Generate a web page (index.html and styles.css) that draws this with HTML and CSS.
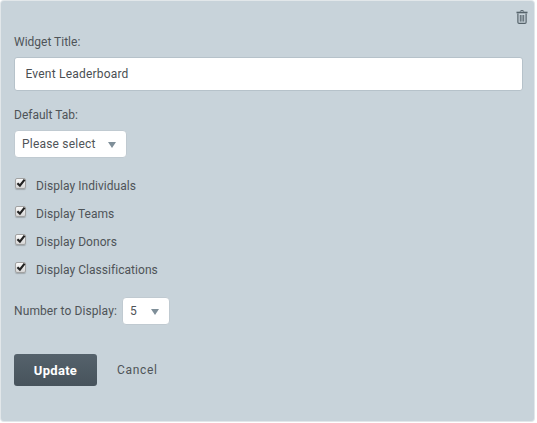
FILE: index.html
```html
<!DOCTYPE html>
<html lang="en">
<head>
<meta charset="utf-8">
<title>Event Leaderboard</title>
<link rel="stylesheet" href="styles.css">
</head>
<body>
<form class="panel">
  <div class="toolbar">
    <svg class="trash" viewBox="0 0 12 14" width="12" height="14" aria-hidden="true">
      <path d="M4.3 1.6 4.8.6h2.4l.5 1" fill="none" stroke="#55626a" stroke-width="1"/>
      <path d="M.5 2.5h11" fill="none" stroke="#55626a" stroke-width="1.6"/>
      <path d="M1.9 3.4v8.8c0 .7.5 1.2 1.2 1.2h5.8c.7 0 1.2-.5 1.2-1.2V3.4" fill="none" stroke="#55626a" stroke-width="1.2"/>
      <path d="M4.3 5v6.6M6 5v6.6M7.7 5v6.6" fill="none" stroke="#55626a" stroke-width="1"/>
    </svg>
  </div>
  <label class="label">Widget Title:</label>
  <input class="text" type="text" value="Event Leaderboard">
  <label class="label tab-label">Default Tab:</label>
  <div class="select select-wide"><span>Please select</span><i class="caret"></i></div>
  <ul class="checks">
    <li><span class="box"><svg viewBox="0 0 10 10" width="10" height="10"><path d="M1.4 5.2 3.9 7.6 8.6 1.6" fill="none" stroke="#222" stroke-width="2.2"/></svg></span>Display Individuals</li>
    <li><span class="box"><svg viewBox="0 0 10 10" width="10" height="10"><path d="M1.4 5.2 3.9 7.6 8.6 1.6" fill="none" stroke="#222" stroke-width="2.2"/></svg></span>Display Teams</li>
    <li><span class="box"><svg viewBox="0 0 10 10" width="10" height="10"><path d="M1.4 5.2 3.9 7.6 8.6 1.6" fill="none" stroke="#222" stroke-width="2.2"/></svg></span>Display Donors</li>
    <li><span class="box"><svg viewBox="0 0 10 10" width="10" height="10"><path d="M1.4 5.2 3.9 7.6 8.6 1.6" fill="none" stroke="#222" stroke-width="2.2"/></svg></span>Display Classifications</li>
  </ul>
  <div class="number">
    <span>Number to Display:</span>
    <div class="select select-small"><span>5</span><i class="caret"></i></div>
  </div>
  <div class="actions">
    <button class="update" type="button">Update</button>
    <a class="cancel">Cancel</a>
  </div>
</form>
</body>
</html>
```
FILE: styles.css
```css
html, body { margin: 0; padding: 0; background: #fff; }
body { width: 537px; height: 423px; overflow: hidden; font-family: Roboto, "Liberation Sans", sans-serif; font-size: 12px; color: #4f5458; }
.panel { box-sizing: border-box; width: 533px; height: 420px; margin: 1px 0 0 1px; padding: 9px 13px 0 13px; background: #c8d3da; border-radius: 3px; box-shadow: 0 0 0 1px #e2e7ea; display: flex; flex-direction: column; align-items: flex-start; }
.toolbar { align-self: stretch; height: 15px; display: flex; justify-content: flex-end; margin-right: -7px; }
.trash { display: block; }
.label { display: block; line-height: 16px; margin-top: 9px; }
.text { box-sizing: border-box; width: 509px; height: 34px; margin: 7px 0 0; padding: 0 10.5px; border: 1px solid #b6c2ca; border-radius: 3px; background: #fff; font: inherit; letter-spacing: 0.2px; color: #4a4f53; outline: none; }
.tab-label { margin-top: 16px; }
.select { box-sizing: border-box; height: 28px; border: 1px solid #c0cad1; border-radius: 4px; background: #fff; display: flex; align-items: center; justify-content: space-between; padding: 0 10px 0 7px; margin-top: 7px; letter-spacing: 0.2px; }
.select-wide { width: 113px; }
.select-small { width: 48px; margin-top: 0; }
.caret { width: 0; height: 0; border-left: 4.5px solid transparent; border-right: 4.5px solid transparent; border-top: 6px solid #7f8f99; margin-top: 1px; }
.checks { list-style: none; margin: 20px 0 0; padding: 0; display: flex; flex-direction: column; gap: 12px; letter-spacing: 0.05px; }
.checks li { display: flex; align-items: center; height: 16px; }
.box { box-sizing: border-box; width: 11px; height: 11px; margin: -6px 10px 0 1px; border: 1px solid #a2a2a2; border-radius: 2px; background: linear-gradient(#fafafa, #d6d6d6); box-shadow: 0 1px 1px rgba(0,0,0,.2); display: flex; align-items: center; justify-content: center; }
.box svg { flex: none; }
.number { display: flex; align-items: center; gap: 5px; margin-top: 19px; letter-spacing: 0.1px; }
.actions { display: flex; align-items: center; margin-top: 29px; }
.update { width: 83px; height: 32px; border: 0; border-radius: 3px; background: linear-gradient(#55626c, #47535c); color: #fff; font: bold 13px Roboto, "Liberation Sans", sans-serif; letter-spacing: 0.3px; padding: 0; }
.cancel { margin-left: 20px; margin-top: -1px; letter-spacing: 0.7px; }
```
